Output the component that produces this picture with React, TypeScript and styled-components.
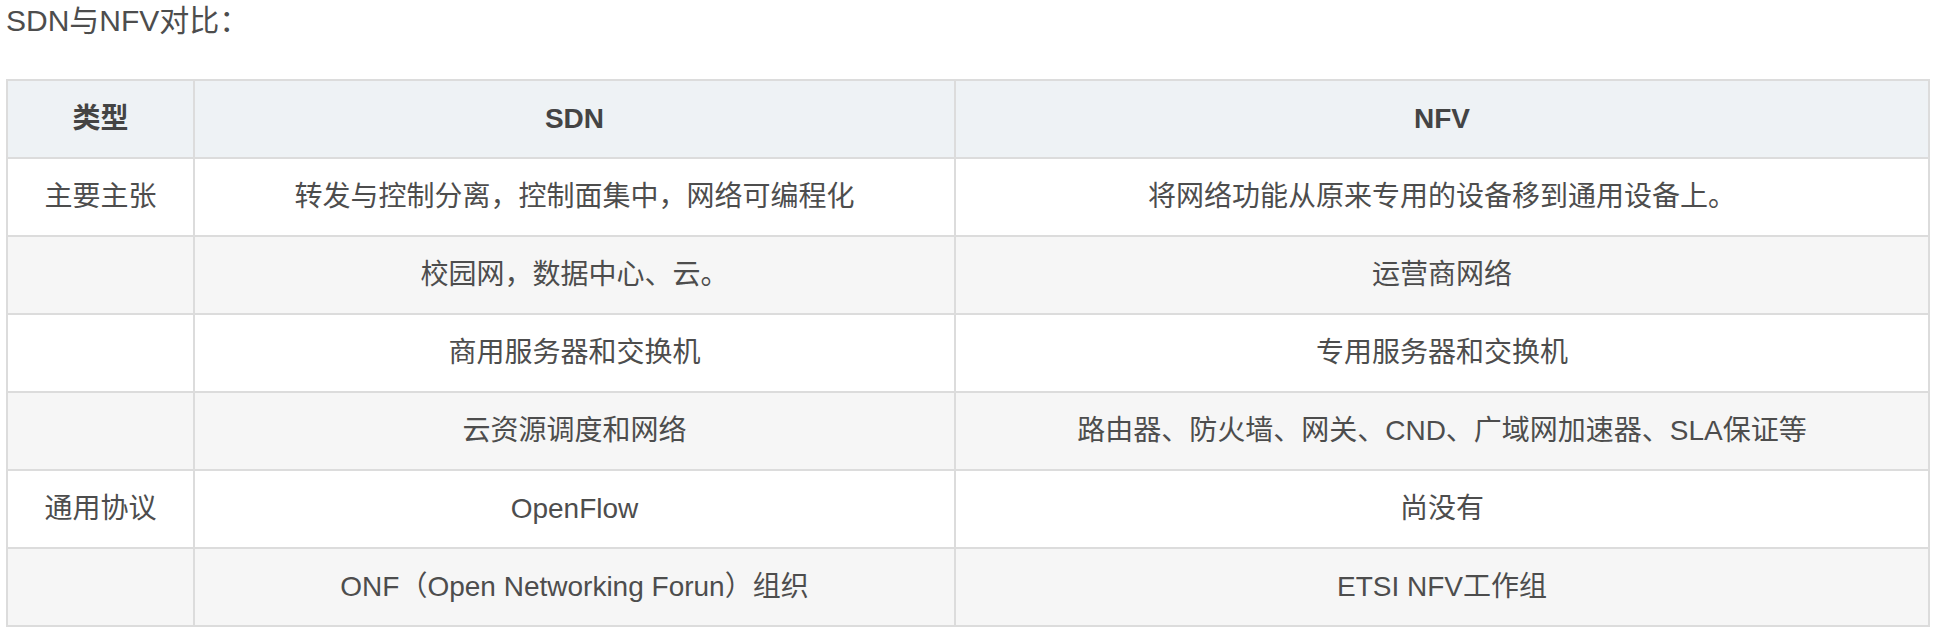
import styled, { createGlobalStyle } from "styled-components";

const GlobalStyle = createGlobalStyle`
  html, body {
    margin: 0;
    padding: 0;
    background: #ffffff;
  }
  body {
    font-family: "Liberation Sans", "Noto Sans CJK SC", sans-serif;
    color: #4d4d4d;
  }
`;

const Page = styled.div`
  padding: 0 28px 0 6px;
`;

const Title = styled.p`
  margin: -2px 0 36px;
  font-size: 30px;
  line-height: 45px;
  color: #4d4d4d;
`;

const Table = styled.table`
  width: 1924px;
  border-collapse: collapse;
  table-layout: fixed;
  font-size: 28px;
`;

const Row = styled.tr<{ $stripe?: boolean }>`
  background: ${(p) => (p.$stripe ? "#f6f6f6" : "#ffffff")};
`;

const HeadRow = styled.tr`
  background: #eef2f5;
`;

const HeadCell = styled.th`
  border: 2px solid #dcdcdc;
  height: 76px;
  padding: 0 16px;
  text-align: center;
  font-weight: 700;
  color: #444444;
  line-height: 42px;
`;

const Cell = styled.td`
  border: 2px solid #dcdcdc;
  height: 76px;
  padding: 0 16px;
  text-align: center;
  color: #4d4d4d;
  line-height: 42px;
`;

const rows = [
  { kind: "主要主张", sdn: "转发与控制分离，控制面集中，网络可编程化", nfv: "将网络功能从原来专用的设备移到通用设备上。" },
  { kind: "", sdn: "校园网，数据中心、云。", nfv: "运营商网络" },
  { kind: "", sdn: "商用服务器和交换机", nfv: "专用服务器和交换机" },
  { kind: "", sdn: "云资源调度和网络", nfv: "路由器、防火墙、网关、CND、广域网加速器、SLA保证等" },
  { kind: "通用协议", sdn: "OpenFlow", nfv: "尚没有" },
  { kind: "", sdn: "ONF（Open Networking Forun）组织", nfv: "ETSI NFV工作组" },
];

export default function App() {
  return (
    <>
      <GlobalStyle />
      <Page>
        <Title>SDN与NFV对比：</Title>
        <Table>
          <colgroup>
            <col style={{ width: 187 }} />
            <col style={{ width: 761 }} />
            <col />
          </colgroup>
          <thead>
            <HeadRow>
              <HeadCell>类型</HeadCell>
              <HeadCell>SDN</HeadCell>
              <HeadCell>NFV</HeadCell>
            </HeadRow>
          </thead>
          <tbody>
            {rows.map((r, i) => (
              <Row key={i} $stripe={i % 2 === 1}>
                <Cell>{r.kind}</Cell>
                <Cell>{r.sdn}</Cell>
                <Cell>{r.nfv}</Cell>
              </Row>
            ))}
          </tbody>
        </Table>
      </Page>
    </>
  );
}
